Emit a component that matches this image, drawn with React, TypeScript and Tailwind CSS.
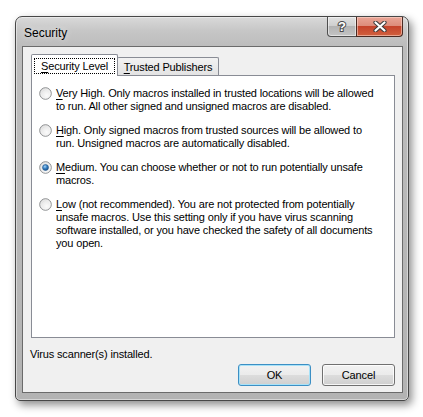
const Radio = ({ checked }: { checked?: boolean }) => (
  <svg width="13" height="13" viewBox="0 0 13 13" className="shrink-0">
    <defs>
      <radialGradient id="rf" cx="0.6" cy="0.65" r="0.7">
        <stop offset="0" stopColor="#fbfbfb" />
        <stop offset="0.6" stopColor="#ebebeb" />
        <stop offset="1" stopColor="#c9c9c9" />
      </radialGradient>
      <radialGradient id="rd" cx="0.4" cy="0.35" r="0.7">
        <stop offset="0" stopColor="#a9d6f7" />
        <stop offset="0.45" stopColor="#3c84c6" />
        <stop offset="1" stopColor="#11467f" />
      </radialGradient>
    </defs>
    <circle cx="6.5" cy="6.5" r="5.8" fill="url(#rf)" stroke="#8d8f91" strokeWidth="1" />
    <circle cx="6.5" cy="6.5" r="4.6" fill="none" stroke="#f7f7f7" strokeWidth="0.8" opacity="0.7" />
    {checked && <circle cx="6.5" cy="6.5" r="3" fill="url(#rd)" stroke="#2a5f93" strokeWidth="0.6" />}
  </svg>
)

const Option = ({ k, rest, lines, checked }: { k: string; rest: string; lines: string[]; checked?: boolean }) => (
  <div className="flex gap-[4px]">
    <Radio checked={checked} />
    <div className="leading-[13px]">
      <div>
        <span className="underline underline-offset-[2px]">{k}</span>
        {rest}
      </div>
      {lines.map((l) => (
        <div key={l}>{l}</div>
      ))}
    </div>
  </div>
)

const btn =
  'w-[73px] h-[22px] rounded-[3px] flex items-center justify-center bg-[linear-gradient(to_bottom,#f2f2f2_0%,#ebebeb_50%,#dddddd_50%,#cfcfcf_100%)]'

export default function App() {
  return (
    <div className="w-[423px] h-[417px] bg-white pt-[16px] pl-[15px] font-['Liberation_Sans',Arial,sans-serif] text-[11px] tracking-[-0.15px] text-black">
      <div className="w-[394px] h-[385px] flex flex-col border border-[#474747] rounded-t-[7px] rounded-b-[5px] bg-[linear-gradient(to_bottom,#d9d9d9_0px,#c6c6c6_14px,#bcbcbc_30px,#b3b3b3_100%)] shadow-[inset_0_0_0_1px_rgba(255,255,255,0.45),3px_4px_8px_rgba(0,0,0,0.45)]">
        {/* title bar */}
        <div className="h-[29px] flex justify-between">
          <div className="pl-[8px] pt-[8px] leading-[16px] text-[12px] tracking-normal [text-shadow:0_0_6px_rgba(255,255,255,0.8)]">
            Security
          </div>
          <div className="flex mr-[5px] h-[20px]">
            <div className="w-[30px] h-[20px] border border-t-0 border-[#4e4e4e] rounded-bl-[4px] flex items-center justify-center bg-[linear-gradient(to_bottom,#e1e1e1_0%,#cdcdcd_50%,#b3b3b3_50%,#c4c4c4_100%)] shadow-[inset_0_0_0_1px_rgba(255,255,255,0.5)]">
              <span className="text-[13px] font-bold leading-none text-white [-webkit-text-stroke:2px_#4a4a4a] [paint-order:stroke_fill] tracking-normal">
                ?
              </span>
            </div>
            <div className="-ml-px w-[47px] h-[20px] border border-t-0 border-[#4a2a22] rounded-br-[4px] flex items-center justify-center bg-[linear-gradient(to_bottom,#e9a596_0%,#dc8a78_50%,#c5432b_50%,#d0613f_100%)] shadow-[inset_0_0_0_1px_rgba(255,220,210,0.55)]">
              <svg width="14" height="11" viewBox="0 0 14 11">
                <path d="M2.5 1.5 L11.5 9.5 M11.5 1.5 L2.5 9.5" stroke="#3b3b3b" strokeWidth="4.2" strokeLinecap="round" />
                <path d="M2.5 1.5 L11.5 9.5 M11.5 1.5 L2.5 9.5" stroke="#ffffff" strokeWidth="2.2" strokeLinecap="round" />
              </svg>
            </div>
          </div>
        </div>

        {/* client area */}
        <div className="ml-[6px] mr-[5px] h-[347px] border border-[#6b6b6b] bg-[#f0f0f0] pl-[8px] pr-[7px] pt-[7px] flex flex-col">
          <div className="flex items-end h-[21px] relative z-10">
            <div className="relative z-10 -mb-px w-[87px] h-[22px] border border-b-0 border-[#898c95] rounded-t-[2px] bg-white pt-[3px] px-[2px]">
              <div className="h-[16px] border border-dotted border-black flex items-center justify-center">
                <span>
                  <span className="underline underline-offset-[2px]">S</span>ecurity Level
                </span>
              </div>
            </div>
            <div className="-ml-px w-[102px] h-[18px] border border-b-0 border-[#898c95] rounded-t-[2px] bg-[linear-gradient(to_bottom,#f2f2f2,#e3e3e3)] flex items-center justify-center pt-px">
              <span>
                <span className="underline underline-offset-[2px]">T</span>rusted Publishers
              </span>
            </div>
          </div>

          <div className="h-[263px] border border-[#898c95] bg-white pt-[11px] pl-[7px] flex flex-col gap-[11px]">
            <Option
              k="V"
              rest="ery High. Only macros installed in trusted locations will be allowed"
              lines={['to run. All other signed and unsigned macros are disabled.']}
            />
            <Option
              k="H"
              rest="igh. Only signed macros from trusted sources will be allowed to"
              lines={['run. Unsigned macros are automatically disabled.']}
            />
            <Option
              k="M"
              rest="edium. You can choose whether or not to run potentially unsafe"
              lines={['macros.']}
              checked
            />
            <Option
              k="L"
              rest="ow (not recommended). You are not protected from potentially"
              lines={[
                'unsafe macros. Use this setting only if you have virus scanning',
                'software installed, or you have checked the safety of all documents',
                'you open.',
              ]}
            />
          </div>

          <div className="mt-[10px] -ml-px leading-[13px]">Virus scanner(s) installed.</div>

          <div className="mt-[3px] flex justify-end gap-[11px]">
            <div className={`${btn} border border-[#3c8fc4] shadow-[inset_0_0_0_1px_#a8e2f8]`}>OK</div>
            <div className={`${btn} border border-[#707070] shadow-[inset_0_0_0_1px_rgba(255,255,255,0.8)]`}>Cancel</div>
          </div>
        </div>
      </div>
    </div>
  )
}
